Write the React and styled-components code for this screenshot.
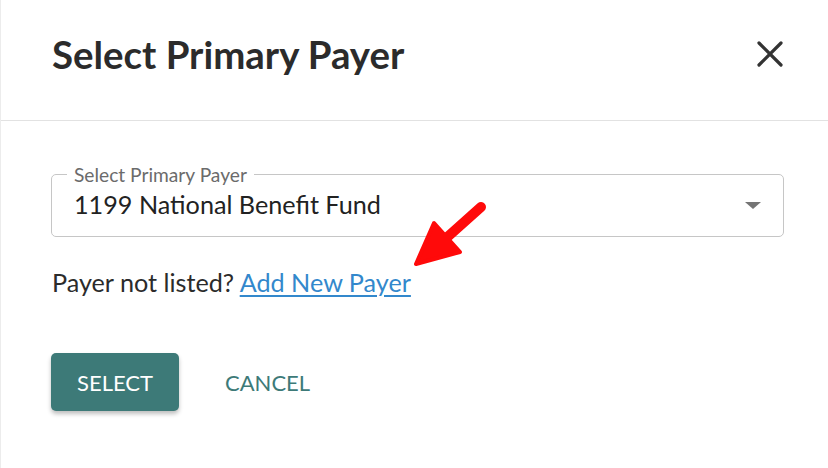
import React from 'react'
import styled, { createGlobalStyle } from 'styled-components'

const GlobalStyle = createGlobalStyle`
  html, body {
    margin: 0;
    padding: 0;
    background: #fff;
  }
  body {
    font-family: Lato, 'Open Sans', sans-serif;
    color: #222;
  }
`

const Dialog = styled.div`
  position: relative;
  width: 828px;
  height: 468px;
  box-sizing: border-box;
  border-left: 1px solid #ececec;
  background: #fff;
`

const Header = styled.div`
  height: 121px;
  box-sizing: border-box;
  display: flex;
  align-items: center;
  justify-content: space-between;
  padding: 0 40px 0 51px;
  border-bottom: 1px solid #e2e2e2;
`

const Title = styled.h2`
  margin: 0;
  margin-top: -12px;
  font-size: 38.4px;
  font-weight: 700;
  color: #2b2b2b;
`

const CloseButton = styled.button`
  border: 0;
  background: none;
  padding: 0;
  margin-top: -12px;
  width: 36px;
  height: 36px;
  display: flex;
  align-items: center;
  justify-content: center;
  cursor: pointer;
`

const Body = styled.div`
  padding: 44px 44px 0 50px;
`

const Field = styled.fieldset`
  margin: 0;
  height: 72px;
  box-sizing: border-box;
  border: 1px solid #c6c6c6;
  border-radius: 5px;
  padding: 0 22px 0 22px;
  display: flex;
  align-items: center;
  justify-content: space-between;
`

const Legend = styled.legend`
  padding: 0 7px;
  margin-left: -7px;
  font-size: 19.2px;
  color: #6b6b6b;
  line-height: 19px;
`

const Value = styled.span`
  font-size: 25.2px;
  color: #222;
  margin-top: -12px;
`

const Caret = styled.span`
  width: 0;
  height: 0;
  border-left: 8px solid transparent;
  border-right: 8px solid transparent;
  border-top: 7px solid #757575;
  margin-top: -10px;
`

const Hint = styled.p`
  margin: 30px 0 0 1px;
  font-size: 25.2px;
  line-height: 30px;
  color: #2b2b2b;
`

const Link = styled.a`
  color: #3388cc;
  text-decoration: underline;
  text-underline-offset: 3px;
  text-decoration-thickness: 2px;
  cursor: pointer;
`

const Actions = styled.div`
  display: flex;
  align-items: center;
  gap: 20px;
  margin-top: 56px;
`

const Button = styled.button`
  height: 58px;
  padding: 0 26px;
  border: 0;
  border-radius: 5px;
  font-family: Lato, sans-serif;
  font-size: 22px;
  text-transform: uppercase;
  cursor: pointer;
  background: ${p => (p.$primary ? '#3d7a78' : 'transparent')};
  color: ${p => (p.$primary ? '#fff' : '#3d7a78')};
  box-shadow: ${p => (p.$primary ? '0 3px 4px rgba(0,0,0,0.25)' : 'none')};
`

const Annotation = styled.svg`
  position: absolute;
  left: 405px;
  top: 195px;
  overflow: visible;
`

export default function App() {
  return (
    <>
      <GlobalStyle />
      <Dialog>
        <Header>
          <Title>Select Primary Payer</Title>
          <CloseButton aria-label="close">
            <svg width="26" height="26" viewBox="0 0 26 26">
              <path d="M2 2 L24 24 M24 2 L2 24" stroke="#333" strokeWidth="3.2" strokeLinecap="round" />
            </svg>
          </CloseButton>
        </Header>
        <Body>
          <Field>
            <Legend>Select Primary Payer</Legend>
            <Value>1199 National Benefit Fund</Value>
            <Caret />
          </Field>
          <Hint>
            Payer not listed? <Link>Add New Payer</Link>
          </Hint>
          <Actions>
            <Button $primary>Select</Button>
            <Button>Cancel</Button>
          </Actions>
        </Body>
        <Annotation width="90" height="80" viewBox="0 0 90 80">
          <path d="M75 12 L28 54" stroke="#ff0a0a" strokeWidth="10" strokeLinecap="round" />
          <path d="M28 28 L10 69 L54 57 Z" fill="#ff0a0a" stroke="#ff0a0a" strokeWidth="4" strokeLinejoin="round" />
        </Annotation>
      </Dialog>
    </>
  )
}
